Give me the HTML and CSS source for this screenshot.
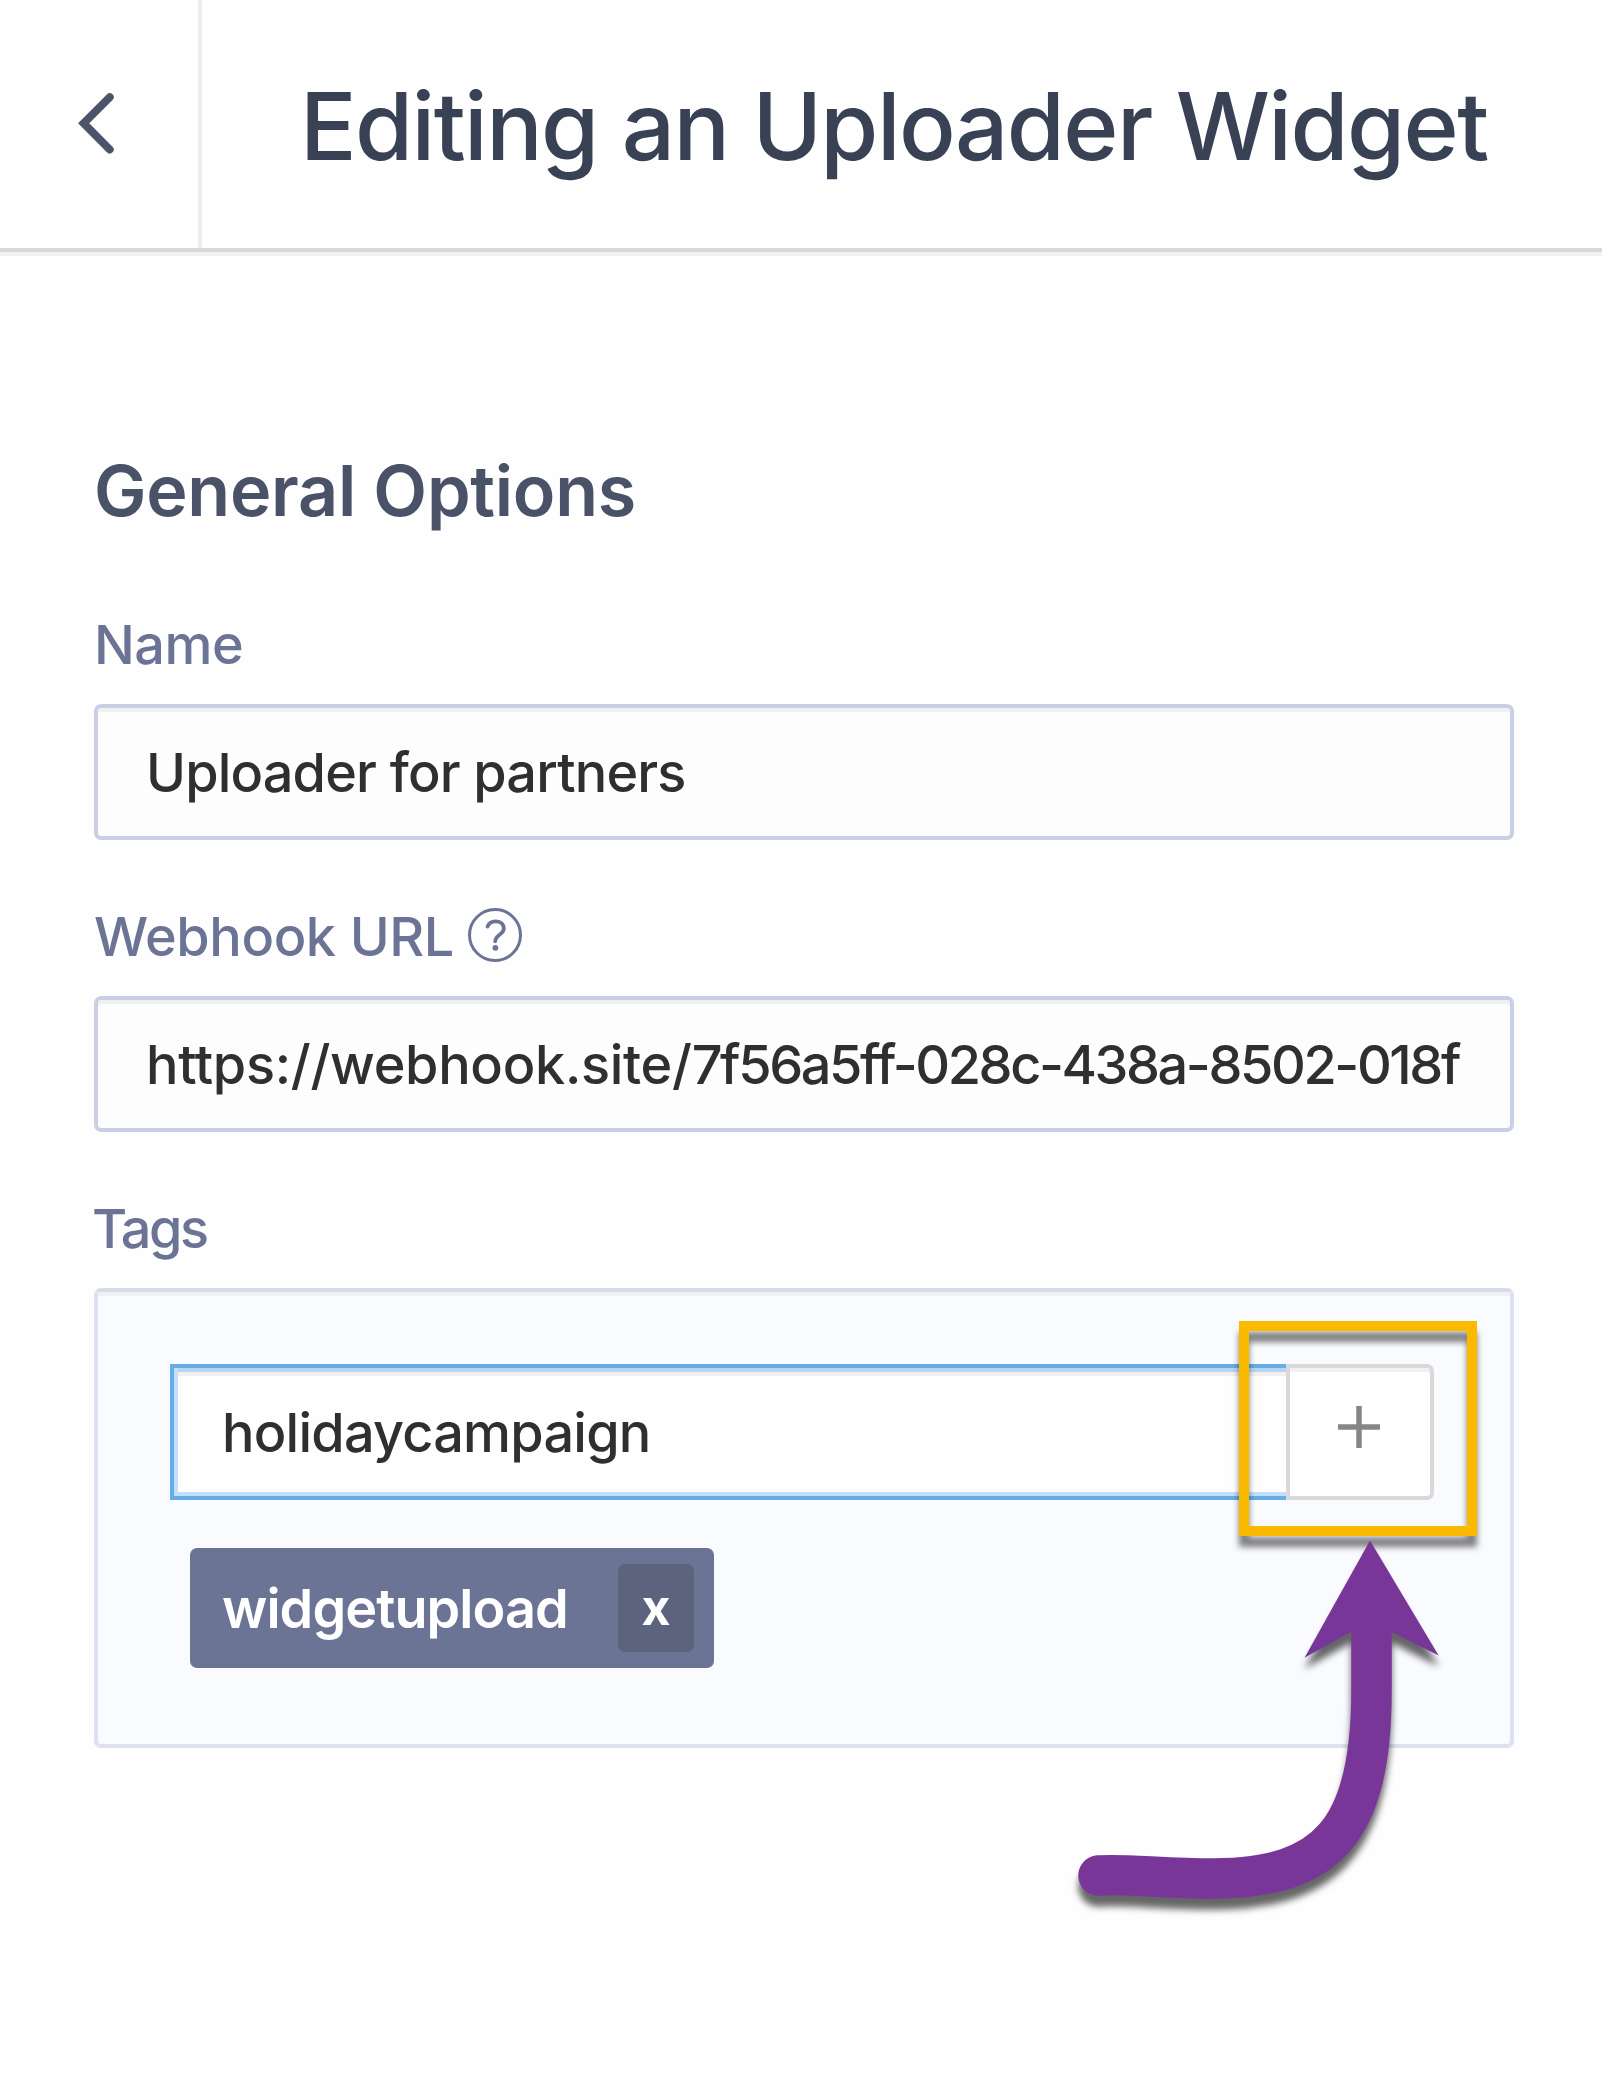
FILE: index.html
```html
<!DOCTYPE html>
<html lang="en">
<head>
<meta charset="utf-8">
<title>Editing an Uploader Widget</title>
<link rel="stylesheet" href="styles.css">
</head>
<body>
<header class="topbar">
  <a class="back" aria-label="Back">
    <svg class="back-icon" width="44" height="68" viewBox="0 0 44 68"><path d="M36.700 8.200 10.700 34.300 36.700 60.500" fill="none" stroke="#4c546a" stroke-width="8" stroke-linecap="round" stroke-linejoin="miter"/></svg>
  </a>
  <h1 class="title">Editing an Uploader Widget</h1>
</header>
<main class="content">
  <h2 class="section-title">General Options</h2>
  <div class="field">
    <div class="label label-name">Name</div>
    <div class="input">Uploader for partners</div>
  </div>
  <div class="field">
    <div class="label label-webhook">Webhook URL
      <svg class="help" width="56" height="56" viewBox="0 0 56 56"><circle cx="28" cy="28" r="25.500" fill="none" stroke="#6c7496" stroke-width="3"/><path d="M20.500 19.500c1.500-3.500 4.500-5.200 8-5.200 4.800 0 8.300 2.800 8.300 7.200 0 6-8.600 6.500-8.600 12.800" fill="none" stroke="#6c7496" stroke-width="3.800" stroke-linecap="round"/><circle cx="28.400" cy="40.800" r="2.900" fill="#6c7496"/></svg>
    </div>
    <div class="input"><span class="url-host">https://webhook.site/</span><span class="url-token">7f56a5ff-028c-438a-8502-018f</span></div>
  </div>
  <div class="field">
    <div class="label label-tags">Tags</div>
    <div class="tagbox">
      <div class="entry">
        <div class="entry-input">holidaycampaign</div>
        <div class="add">
          <svg class="plus" width="42" height="42" viewBox="0 0 42 42"><path d="M21 0v42M0 21h42" stroke="#868686" stroke-width="5.500"/></svg>
          <div class="highlight"></div>
        </div>
      </div>
      <div class="tag"><span class="tag-text">widgetupload</span><span class="tag-remove">x</span></div>
      <svg class="arrow" width="400" height="400" viewBox="1060 1530 400 400">
        <g fill="#783699">
          <path d="M1098.500 1875.500C1122 1873.500 1165 1878.500 1213 1878.500C1328 1878.500 1371.500 1830 1371.500 1690V1625" fill="none" stroke="#783699" stroke-width="40.500" stroke-linecap="round"/>
          <path d="M1370 1540.500 1438.700 1655.500 1391.700 1632H1351L1304.500 1657.700Z"/>
        </g>
      </svg>
    </div>
  </div>
</main>
</body>
</html>
```
FILE: styles.css
```css
* { box-sizing: border-box; }
body {
  margin: 0;
  min-height: 2094px;
  background: #fefefe;
  font-family: Inter, "Liberation Sans", sans-serif;
  font-size: 54px;
  font-weight: 500;
  color: #2f2f2f;
  white-space: nowrap;
}
.topbar {
  display: flex;
  height: 252px;
  border-bottom: 4px solid #d9d9d9;
  box-shadow: 0 4px 0 #f1f1f1;
}
.back {
  display: flex;
  align-items: center;
  width: 202px;
  padding-left: 73px;
  padding-bottom: 3px;
  border-right: 4px solid #ebebeb;
}
.title {
  margin: 0;
  padding-left: 98px;
  font-size: 94px;
  font-weight: 500;
  line-height: 253px;
  letter-spacing: -1.6px;
  word-spacing: 0.5px;
  color: #394155;
}
.content { padding: 198px 88px 0 94px; }
.section-title {
  margin: 0 0 82px;
  font-size: 70px;
  font-weight: 600;
  line-height: 82px;
  height: 80px;
  letter-spacing: -0.25px;
  color: #4a5268;
}
.field { margin-bottom: 64px; }
.label {
  display: flex;
  align-items: center;
  height: 64px;
  margin-bottom: 28px;
  line-height: 64px;
  padding-top: 2px;
  color: #6c7496;
}
.label-name { letter-spacing: -0.5px; }
.label-webhook { letter-spacing: -0.4px; gap: 13px; }
.label-tags { letter-spacing: -2.5px; margin-left: -2px; }
.help { flex: none; margin-top: -4px; }
.input {
  height: 136px;
  padding-left: 48px;
  border: 4px solid #c9d0e6;
  border-radius: 7px;
  background: #fdfdfe;
  box-shadow: inset 0 4px 0 #f0f0f1;
  line-height: 130px;
  letter-spacing: -0.83px;
}
.url-host { letter-spacing: -0.3px; }
.url-token { letter-spacing: -2.4px; }
.tagbox {
  position: relative;
  height: 460px;
  padding: 72px 76px 0 72px;
  border: 4px solid #dde1f0;
  border-top-color: #d8dbe9;
  border-radius: 7px;
  background: #fafbff;
  box-shadow: inset 0 4px 0 #f1f2f6;
}
.entry { display: flex; height: 136px; }
.entry-input {
  flex: 1;
  padding-left: 48px;
  border: 4px solid #65ade8;
  border-right: 0;
  background: #fefefe;
  box-shadow: inset 4px 0 0 #c3dffb, inset 0 -4px 0 #c3dffb, inset 0 4px 0 #b9d5f1, inset 0 8px 0 #f0f0f0;
  line-height: 130px;
  letter-spacing: -0.76px;
}
.add {
  position: relative;
  display: flex;
  align-items: center;
  justify-content: center;
  width: 148px;
  padding: 0 2px 10px 0;
  border: 4px solid #d9d9d9;
  border-radius: 0 7px 7px 0;
  background: #fff;
  box-shadow: inset 0 4px 0 #f0f0f0;
}
.highlight {
  position: absolute;
  left: -51px;
  top: -47px;
  width: 238px;
  height: 215px;
  border: 10px solid #fbb900;
  filter: drop-shadow(0 11px 3px rgba(0, 0, 0, 0.5));
}
.tag {
  display: flex;
  align-items: center;
  justify-content: space-between;
  width: 524px;
  height: 120px;
  margin: 48px 0 0 20px;
  padding: 0 20px 0 32px;
  border-radius: 7px;
  background: #6c7496;
  color: #fff;
}
.tag-text { font-weight: 600; letter-spacing: -0.92px; }
.tag-remove {
  width: 76px;
  height: 88px;
  border-radius: 7px;
  background: #5c637c;
  font-size: 50px;
  font-weight: 700;
  line-height: 86px;
  text-align: center;
}
.arrow {
  position: absolute;
  left: 962px;
  top: 238px;
  filter: drop-shadow(0 11px 3.5px rgba(0, 0, 0, 0.6));
}
```
